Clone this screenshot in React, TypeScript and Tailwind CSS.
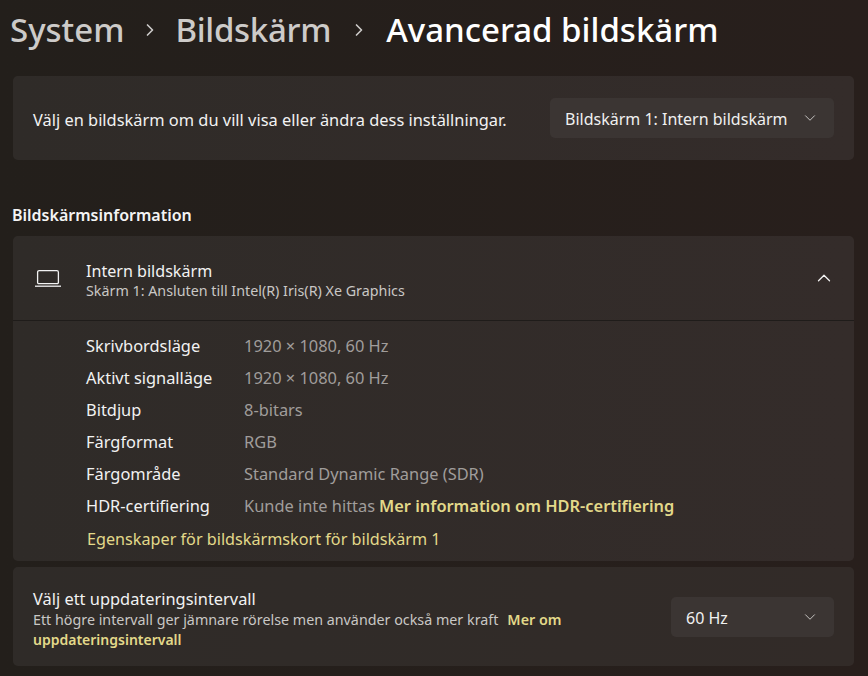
import { ChevronDown, ChevronRight, ChevronUp } from "lucide-react";

const rows = [
  { label: "Skrivbordsläge", value: "1920 × 1080, 60 Hz" },
  { label: "Aktivt signalläge", value: "1920 × 1080, 60 Hz" },
  { label: "Bitdjup", value: "8-bitars" },
  { label: "Färgformat", value: "RGB" },
  { label: "Färgområde", value: "Standard Dynamic Range (SDR)" },
];

const Laptop = () => (
  <svg width="26" height="18" viewBox="0 0 26 18" fill="none" stroke="#f2f2f2" strokeWidth="1.3">
    <path d="M2.6 13.4V3.2a1.6 1.6 0 0 1 1.6-1.6h17.6a1.6 1.6 0 0 1 1.6 1.6v10.2a1.2 1.2 0 0 1-1.2 1.2H3.8a1.2 1.2 0 0 1-1.2-1.2Z" />
    <path d="M0 17.2h26" />
  </svg>
);

function Dropdown({ label, width }: { label: string; width: string }) {
  return (
    <div className={`flex h-10 items-center justify-between rounded-[5px] bg-[#3b3533] pl-[15px] pr-[15px] text-[16px] text-[#f0f0f0] ${width}`}>
      <span className="pt-[2px]">{label}</span>
      <ChevronDown size={18} strokeWidth={1.3} className="text-[#c9c6c4]" />
    </div>
  );
}

export default function App() {
  return (
    <div className="h-[676px] w-[868px] overflow-hidden bg-gradient-to-r from-[#231f1b] to-[#281f1c] pl-[13px] pr-[14px] font-['Noto_Sans',sans-serif] text-white">
      {/* sökväg */}
      <div className="-ml-[3px] flex h-[76px] items-start pt-[8px] text-[33px] font-medium leading-[44px]">
        <span className="text-[#cdcbc9]">System</span>
        <ChevronRight size={20} strokeWidth={2} className="mx-[15.5px] mt-[12px] text-[#cdcbc9]" />
        <span className="tracking-[-0.3px] text-[#cdcbc9]">Bildskärm</span>
        <ChevronRight size={20} strokeWidth={2} className="mx-[17.5px] mt-[12px] text-[#cdcbc9]" />
        <span className="text-white">Avancerad bildskärm</span>
      </div>

      <div className="flex h-[84px] items-center justify-between rounded-[5px] bg-gradient-to-r from-[#2f2b28] to-[#342c2a] pl-[20px] pr-[20px] text-[16.4px] text-[#f2f2f2]">
        <span className="pt-[4px]">Välj en bildskärm om du vill visa eller ändra dess inställningar.</span>
        <Dropdown label="Bildskärm 1: Intern bildskärm" width="w-[284px]" />
      </div>

      <h2 className="-ml-px mt-[43px] h-[33px] text-[16px] font-semibold leading-[24px] text-[#f4f4f4]">Bildskärmsinformation</h2>

      <div className="rounded-[5px] bg-gradient-to-r from-[#2f2b28] to-[#342c2a]">
        <div className="flex h-[85px] items-center border-b border-[#1f1c1a] pl-[22px] pr-[19px]">
          <Laptop />
          <div className="ml-[25px] flex-1 pt-[3px]">
            <div className="text-[16.1px] leading-[22px] text-[#f2f2f2]">Intern bildskärm</div>
            <div className="text-[14.3px] leading-[18px] text-[#c9c7c5]">Skärm 1: Ansluten till Intel(R) Iris(R) Xe Graphics</div>
          </div>
          <ChevronUp size={22} strokeWidth={1.4} className="text-[#f2f2f2]" />
        </div>

        <div className="pb-[6px] pl-[73px] pt-[9px] text-[16.4px] leading-[32px]">
          {rows.map((r) => (
            <div key={r.label} className="flex">
              <span className="w-[158px] text-[#f2f2f2]">{r.label}</span>
              <span className="text-[#a09d9b]">{r.value}</span>
            </div>
          ))}
          <div className="flex">
            <span className="w-[158px] text-[#f2f2f2]">HDR-certifiering</span>
            <span className="text-[#a09d9b]">Kunde inte hittas</span>
            <span className="ml-[4px] font-semibold text-[#e3d98a]">Mer information om HDR-certifiering</span>
          </div>
          <div className="mt-px pl-px text-[16.2px] text-[#e3d98a]">Egenskaper för bildskärmskort för bildskärm 1</div>
        </div>
      </div>

      <div className="mt-[6px] flex h-[99px] items-center justify-between rounded-[5px] bg-gradient-to-r from-[#2f2b28] to-[#322b28] pl-[20px] pr-[20px]">
        <div className="w-[600px] pt-[4px]">
          <div className="text-[16.4px] leading-[22px] text-[#f2f2f2]">Välj ett uppdateringsintervall</div>
          <div className="text-[14.3px] leading-[20px] text-[#c9c7c5]">
            <span>Ett högre intervall ger jämnare rörelse men använder också mer kraft</span>
            <span className="ml-[9px] font-semibold text-[#e3d98a]">Mer om</span>
          </div>
          <div className="text-[14px] font-semibold leading-[20px] text-[#e3d98a]">uppdateringsintervall</div>
        </div>
        <Dropdown label="60 Hz" width="w-[163px]" />
      </div>
    </div>
  );
}
